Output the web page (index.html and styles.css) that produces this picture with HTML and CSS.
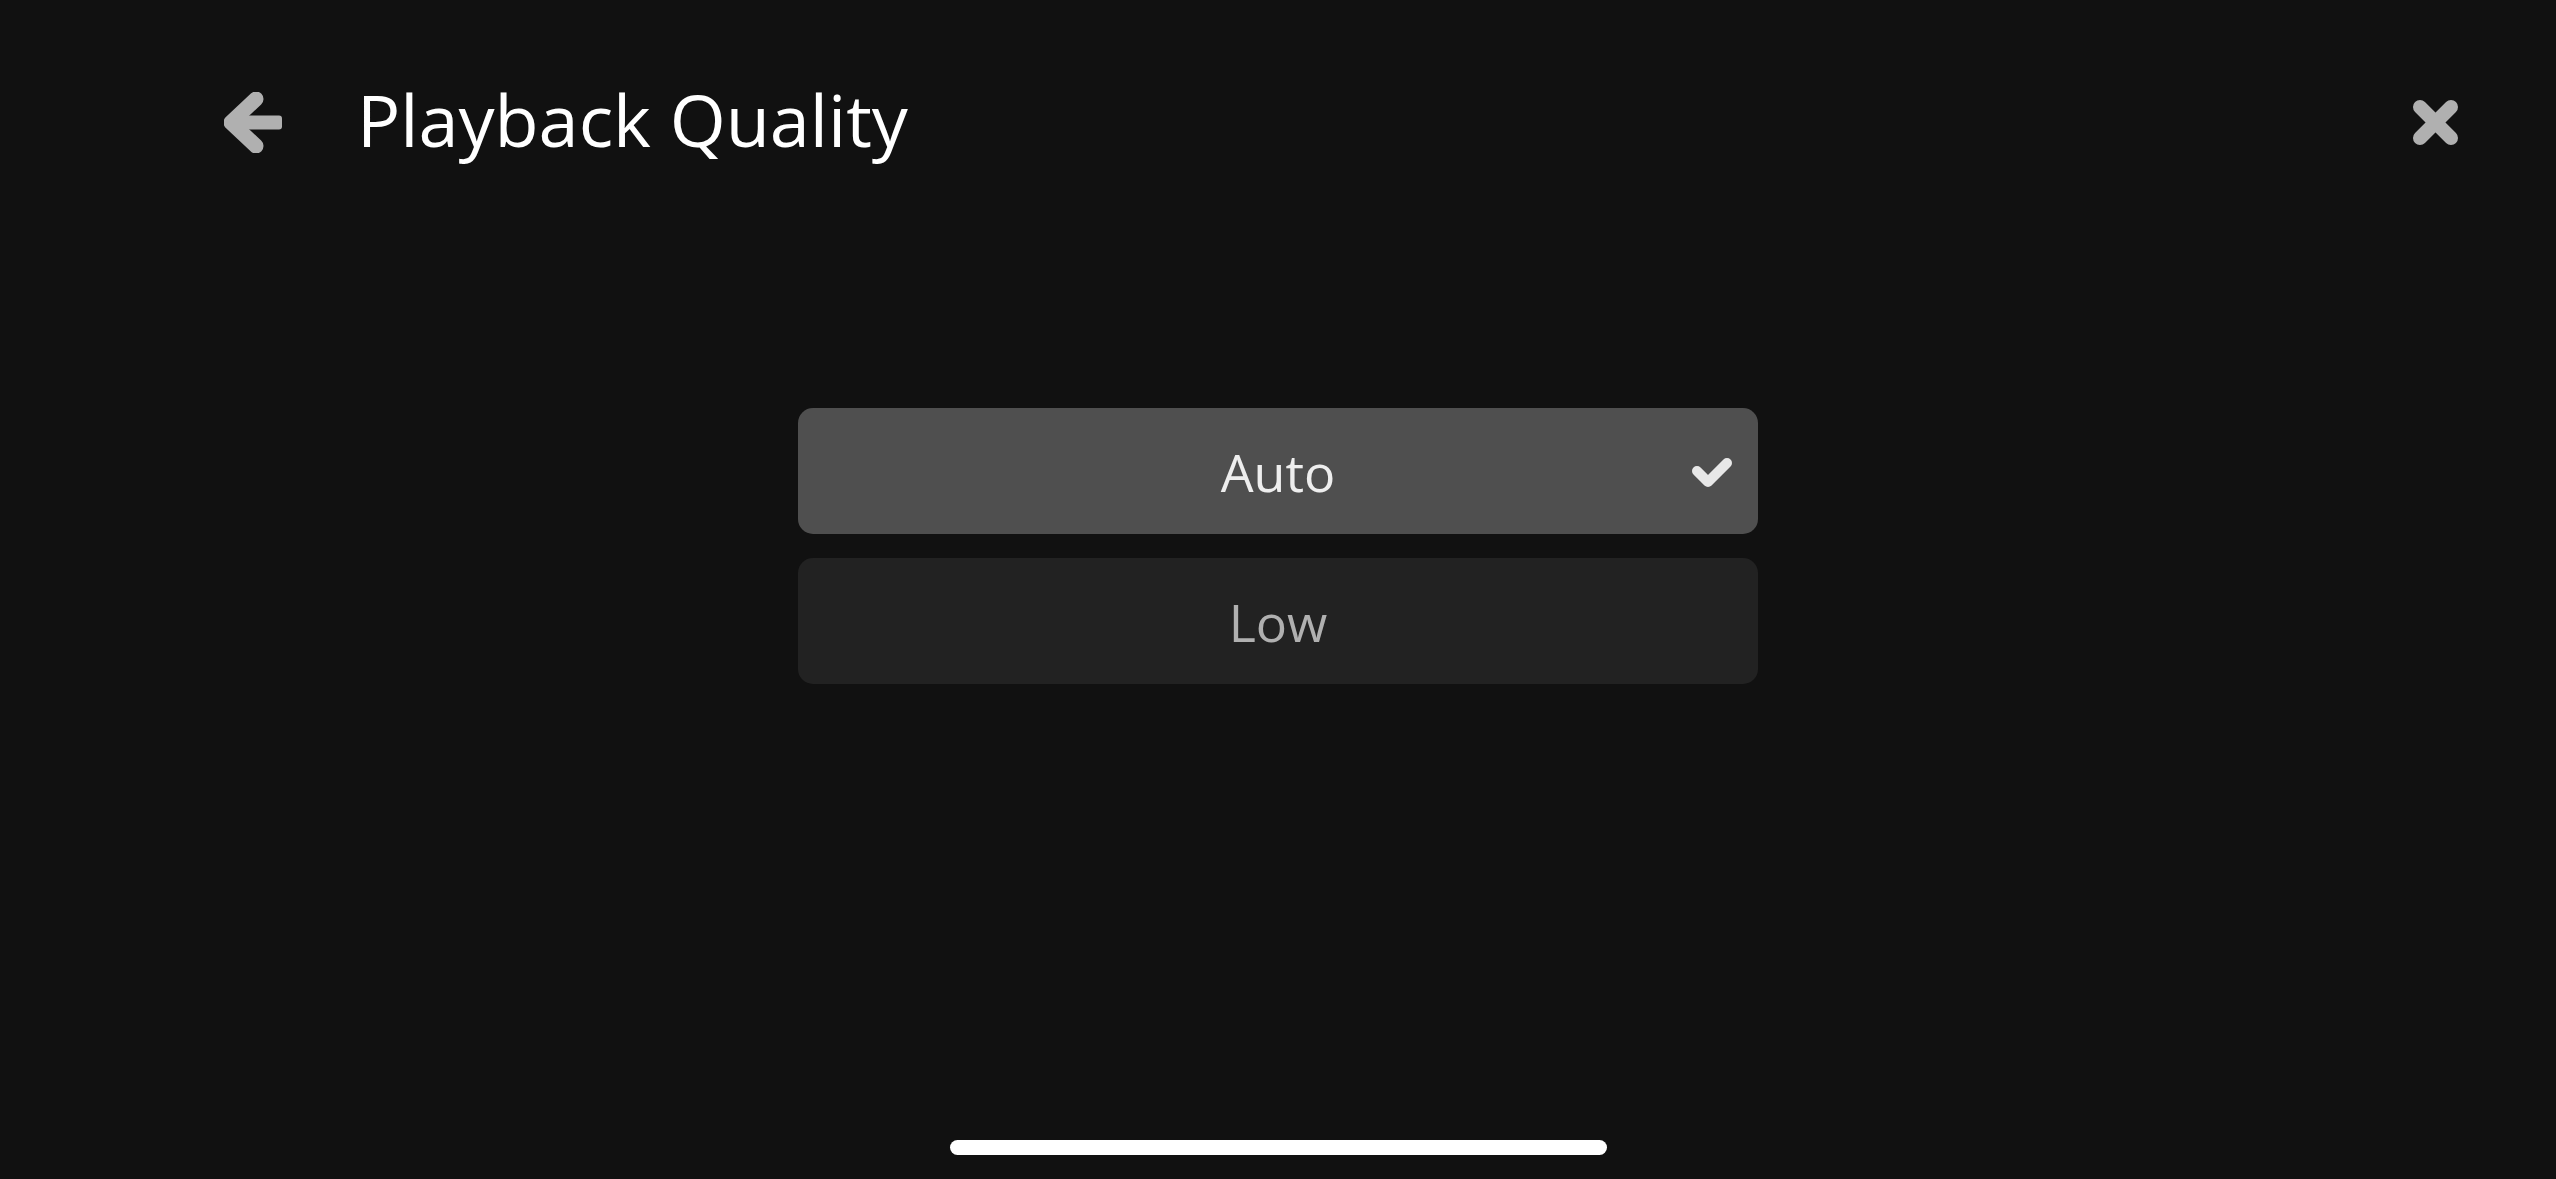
FILE: index.html
```html
<!DOCTYPE html>
<html lang="en">
<head>
    <meta charset="UTF-8">
    <title>Playback Quality</title>
    <link rel="stylesheet" href="styles.css">
</head>
<body>
    <div class="screen">
        <!-- Header -->
        <div class="header">
            <button class="icon-btn back-btn" aria-label="Back">
                <svg width="58" height="61" viewBox="0 0 58 61">
                    <polyline points="32,7 7,30.5 32,54" fill="none" stroke="#b0b0b0" stroke-width="15" stroke-linecap="round" stroke-linejoin="round"/>
                    <rect x="12" y="23.5" width="46" height="14" rx="3" fill="#b0b0b0"/>
                </svg>
            </button>
            <h1 class="title">Playback Quality</h1>
            <button class="icon-btn close-btn" aria-label="Close">
                <svg width="47" height="47" viewBox="0 0 47 47">
                    <line x1="8" y1="8" x2="39" y2="39" stroke="#b0b0b0" stroke-width="14" stroke-linecap="round"/>
                    <line x1="39" y1="8" x2="8" y2="39" stroke="#b0b0b0" stroke-width="14" stroke-linecap="round"/>
                </svg>
            </button>
        </div>

        <!-- Options -->
        <ul class="options">
            <li class="option selected">
                <span>Auto</span>
                <svg class="check" width="40" height="32" viewBox="0 0 40 32">
                    <polyline points="5,14 16,25 35,6" fill="none" stroke="#e8e8e8" stroke-width="10" stroke-linecap="round" stroke-linejoin="round"/>
                </svg>
            </li>
            <li class="option">
                <span>Low</span>
            </li>
        </ul>

        <div class="home-indicator"></div>
    </div>
</body>
</html>
```

FILE: styles.css
```css
body {
    margin: 0;
    background-color: #111111;
    font-family: "Open Sans", "Noto Sans", sans-serif;
    color: #fff;
}
.screen {
    display: flex;
    flex-direction: column;
    height: 100vh;
}
.header {
    display: flex;
    align-items: center;
    height: 244px;
    padding: 0 97px 0 224px;
}
.icon-btn {
    background: none;
    border: none;
    padding: 0;
    display: flex;
    cursor: pointer;
}
.title {
    flex: 1;
    margin: 0 0 6px 75px;
    font-size: 72px;
    font-weight: 400;
    color: #ffffff;
}
.options {
    list-style-type: none;
    margin: 164px auto 0;
    padding: 0;
    width: 960px;
    display: flex;
    flex-direction: column;
    gap: 24px;
}
.option {
    position: relative;
    height: 126px;
    border-radius: 15px;
    background-color: #222222;
    color: #b0b0b0;
    font-size: 52px;
    display: flex;
    align-items: center;
    justify-content: center;
}
.option.selected {
    background-color: #4f4f4f;
    color: #eeeeee;
}
.check {
    position: absolute;
    right: 26px;
    top: 49px;
}
.home-indicator {
    margin: auto auto 24px;
    width: 657px;
    height: 15px;
    border-radius: 8px;
    background-color: #ffffff;
}
```
